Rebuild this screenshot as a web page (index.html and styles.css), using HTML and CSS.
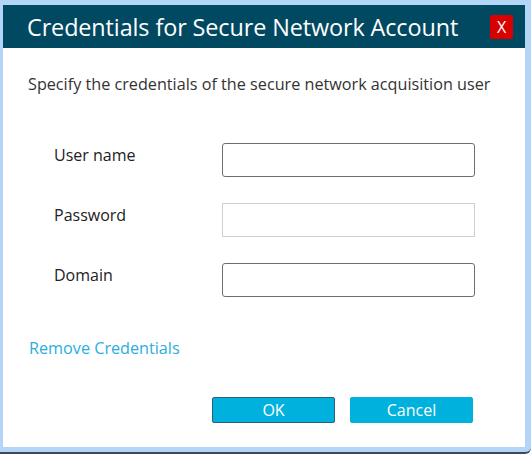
FILE: index.html
```html
<!DOCTYPE html>
<html>
<head>
<meta charset="utf-8">
<link rel="stylesheet" href="styles.css">
</head>
<body>
<div class="frame">
  <div class="window">
    <div class="titlebar">
      <span class="title">Credentials for Secure Network Account</span>
      <span class="close">X</span>
    </div>
    <div class="content">
      <p class="intro">Specify the credentials of the secure network acquisition user</p>
      <div class="form">
        <label class="label">User name</label>
        <div class="input dark"></div>
        <label class="label">Password</label>
        <div class="input light"></div>
        <label class="label">Domain</label>
        <div class="input dark"></div>
      </div>
      <a class="remove">Remove Credentials</a>
      <div class="buttons">
        <button class="btn ok">OK</button>
        <button class="btn cancel">Cancel</button>
      </div>
    </div>
  </div>
</div>
</body>
</html>
```

FILE: styles.css
```css
* { box-sizing: border-box; }
html, body { margin: 0; padding: 0; }
body {
  width: 531px;
  height: 454px;
  font-family: "Open Sans", "Noto Sans", sans-serif;
  background: #fff;
}
.frame {
  width: 531px;
  height: 454px;
  background: #b3d6f7;
  padding: 5px 6px 5px 3px;
  border-bottom: 2px solid #3b4a58;
  border-bottom-right-radius: 6px;
}
.window {
  width: 522px;
  height: 442px;
  background: #fff;
  display: flex;
  flex-direction: column;
}
.titlebar {
  height: 43px;
  background: #014961;
  display: flex;
  align-items: center;
  justify-content: space-between;
  padding: 0 12px 0 24px;
}
.title {
  color: #fff;
  font-size: 23.4px;
  letter-spacing: -0.1px;
}
.close {
  width: 23px;
  height: 24px;
  background: #d80000;
  border-radius: 2px;
  color: #fff;
  font-size: 16px;
  display: flex;
  align-items: center;
  justify-content: center;
}
.content {
  padding: 0 0 0 25px;
}
.intro {
  margin: 26px 0 0 0;
  font-size: 16.2px;
  line-height: 20px;
  color: #333;
}
.form {
  display: grid;
  grid-template-columns: 194px 253px;
  row-gap: 26px;
  margin-top: 49px;
  align-items: center;
}
.label {
  font-size: 16px;
  color: #222;
  padding-left: 26px;
  margin-top: -10px;
}
.input {
  height: 34px;
  background: #fff;
}
.input.dark {
  border: 1px solid #6e6e6e;
  border-radius: 3px;
}
.input.light {
  border: 1px solid #cfcfcf;
}
.remove {
  display: block;
  margin-top: 40px;
  font-size: 16.2px;
  line-height: 22px;
  padding-left: 1px;
  color: #2aaede;
}
.buttons {
  display: flex;
  gap: 15px;
  margin: 38px 0 0 184px;
}
.btn {
  width: 123px;
  height: 26px;
  background: #00b1dd;
  color: #fff;
  font-family: inherit;
  font-size: 16px;
  border: 1px solid #00b1dd;
  border-radius: 2px;
  padding: 0;
}
.btn.ok {
  border-color: #2b6178;
}
```
